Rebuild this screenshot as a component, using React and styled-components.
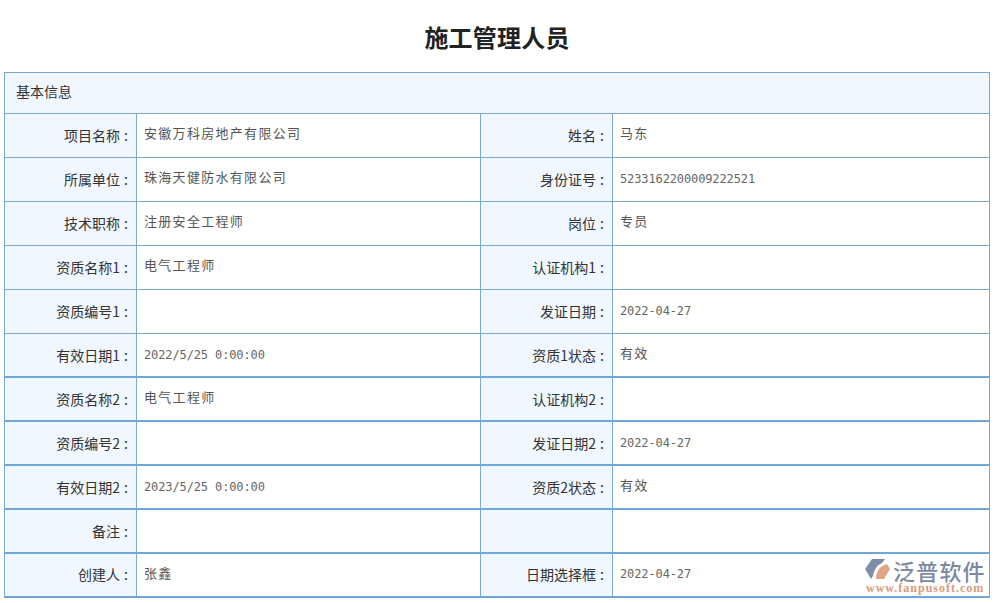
import React from "react";
import styled, { createGlobalStyle } from "styled-components";

const CJK = `"Noto Sans CJK SC", "Liberation Sans", sans-serif`;

const GlobalStyle = createGlobalStyle`
  html, body {
    margin: 0;
    padding: 0;
    background: #fff;
    overflow: hidden;
  }
`;

const Page = styled.div`
  position: relative;
  width: 995px;
  height: 603px;
  padding: 0 5px 0 4px;
  box-sizing: border-box;
  font-family: ${CJK};
`;

const Title = styled.h1`
  margin: 0;
  height: 72px;
  padding-top: 18px;
  box-sizing: border-box;
  font-size: 24px;
  line-height: 38px;
  font-weight: 700;
  letter-spacing: 0.2px;
  color: #222;
  text-align: center;
`;

const Sheet = styled.div`
  border: 1px solid #7ba9cf;
  border-bottom: 0;
`;

const SectionHead = styled.div`
  height: 40px;
  padding-left: 11px;
  background: #f0f7fe;
  font-size: 14px;
  line-height: 37px;
  color: #333;
`;

// the thick lines sit one pixel into the row above, so the row has to paint over it
const Row = styled.div`
  position: relative;
  display: grid;
  grid-template-columns: 132px 344px 132px 1fr;
  grid-template-rows: minmax(0, 1fr);
  height: ${(p) => (p.$thick ? "45px" : "44px")};
  margin-top: ${(p) => (p.$thick ? "-1px" : "0")};
  box-sizing: border-box;
  border-top: ${(p) => (p.$thick ? "2px solid #6fa8d8" : "1px solid #7ba9cf")};
  &:last-child {
    height: 46px;
    border-bottom: 2px solid #6fa8d8;
  }
`;

const Label = styled.div`
  display: flex;
  justify-content: flex-end;
  align-items: center;
  padding: 0 8px 2px 0;
  background: #f0f7fe;
  border-right: 1px solid #7ba9cf;
  font-size: 14px;
  color: #333;
`;

const Colon = styled.span`
  padding-left: 4px;
`;

const Value = styled.div`
  display: flex;
  align-items: center;
  padding: 0 0 6px 7px;
  border-right: ${(p) => (p.$end ? "0" : "1px solid #7ba9cf")};
  font-size: 13px;
  letter-spacing: 1.3px;
  color: #555;
`;

const Digits = styled.span`
  display: block;
  padding-top: 4px;
  font-family: "DejaVu Sans Mono", monospace;
  font-size: 12px;
  letter-spacing: -0.12px;
  color: #666;
`;

const Logo = styled.div`
  position: absolute;
  right: 10px;
  bottom: 9px;
  width: 120px;
  height: 38px;
`;

const LogoMark = styled.svg`
  display: block;
  margin-top: 2px;
`;

const LogoName = styled.div`
  position: absolute;
  left: 28px;
  top: 2px;
  font-size: 22px;
  font-weight: 500;
  line-height: 24px;
  letter-spacing: 1.2px;
  white-space: nowrap;
  color: #7b8aa3;
`;

const LogoUrl = styled.div`
  position: absolute;
  left: 1px;
  top: 26px;
  font-family: "Liberation Serif", serif;
  font-size: 12px;
  font-weight: 700;
  line-height: 12px;
  letter-spacing: 1px;
  white-space: nowrap;
  color: #d99a78;
`;

const rows = [
  ["项目名称", "安徽万科房地产有限公司", "姓名", "马东"],
  ["所属单位", "珠海天健防水有限公司", "身份证号", "5233162200009222521"],
  ["技术职称", "注册安全工程师", "岗位", "专员"],
  ["资质名称1", "电气工程师", "认证机构1", ""],
  ["资质编号1", "", "发证日期", "2022-04-27"],
  ["有效日期1", "2022/5/25 0:00:00", "资质1状态", "有效"],
  ["资质名称2", "电气工程师", "认证机构2", "", true],
  ["资质编号2", "", "发证日期2", "2022-04-27", true],
  ["有效日期2", "2023/5/25 0:00:00", "资质2状态", "有效", true],
  ["备注", "", "", "", true],
  ["创建人", "张鑫", "日期选择框", "2022-04-27", true],
];

const showValue = (text) =>
  /^[\d\s/:-]+$/.test(text) ? <Digits>{text}</Digits> : text;

const showLabel = (text) =>
  text ? (
    <>
      {text}
      <Colon>:</Colon>
    </>
  ) : null;

export default function App() {
  return (
    <Page>
      <GlobalStyle />
      <Title>施工管理人员</Title>
      <Sheet>
        <SectionHead>基本信息</SectionHead>
        {rows.map(([a, b, c, d, thick], i) => (
          <Row key={i} $thick={thick}>
            <Label>{showLabel(a)}</Label>
            <Value>{showValue(b)}</Value>
            <Label>{showLabel(c)}</Label>
            <Value $end>{showValue(d)}</Value>
          </Row>
        ))}
      </Sheet>
      <Logo>
        <LogoMark width="26" height="24" viewBox="0 0 26 24">
          <path d="M7 1 H20 L17 5 C12 7 9 12 8 18 L6 21 L0 11 Z" fill="#7f8ea8" />
          <path d="M11 21 C11 13 15 8 22 6 L25 11 L19 21 H11 Z" fill="#e0a583" />
        </LogoMark>
        <LogoName>泛普软件</LogoName>
        <LogoUrl>www.fanpusoft.com</LogoUrl>
      </Logo>
    </Page>
  );
}
